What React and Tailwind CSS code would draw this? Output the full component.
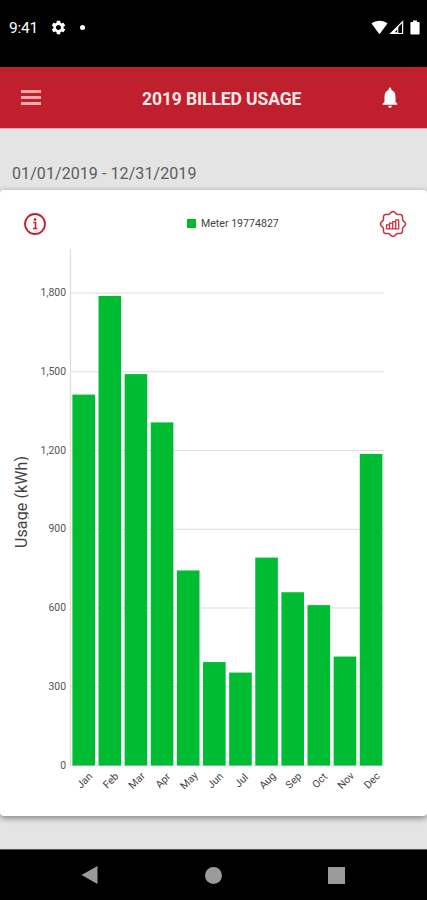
import { MdSettings, MdNotifications } from 'react-icons/md';

const usage = [
  { month: 'Jan', kwh: 1413 },
  { month: 'Feb', kwh: 1789 },
  { month: 'Mar', kwh: 1491 },
  { month: 'Apr', kwh: 1307 },
  { month: 'May', kwh: 743 },
  { month: 'Jun', kwh: 394 },
  { month: 'Jul', kwh: 354 },
  { month: 'Aug', kwh: 792 },
  { month: 'Sep', kwh: 660 },
  { month: 'Oct', kwh: 611 },
  { month: 'Nov', kwh: 415 },
  { month: 'Dec', kwh: 1187 },
];

const ticks = [0, 300, 600, 900, 1200, 1500, 1800];

const LEFT = 70.5;
const RIGHT = 384;
const BASE = 525.5;
const SCALE = 0.2625; // px per kWh
const STEP = (RIGHT - LEFT) / usage.length;

// wavy outline with eight lobes for the badge icon
const badgePoints = Array.from({ length: 96 }, (_, i) => {
  const a = (i / 96) * Math.PI * 2;
  const r = 11.5 + Math.cos(a * 8);
  return `${(14 + r * Math.cos(a)).toFixed(2)},${(14 + r * Math.sin(a)).toFixed(2)}`;
}).join(' ');

const StatusBar = () => (
  <div className="flex h-[67px] items-start justify-between bg-black pt-[17px] text-white">
    <div className="flex h-5 items-center pl-[9px]">
      <span className="w-[29px] pt-0.5 text-[15.5px] leading-5 tracking-[-0.2px]">9:41</span>
      <MdSettings className="ml-3 h-[17px] w-[17px]" />
      <span className="ml-[13px] h-[5px] w-[5px] rounded-full bg-white" />
    </div>
    <div className="flex h-5 items-center pr-[7px]">
      <svg width="17" height="15" viewBox="0 0 17 15" fill="currentColor">
        <path d="M0.5 3.6C2.8 1.8 5.5 0.8 8.5 0.8s5.7 1 8 2.8L8.5 14.2z" />
      </svg>
      <svg className="ml-px" width="15" height="15" viewBox="0 0 15 15">
        <path d="M1.8 13.5 13.6 1.8v11.7z" fill="none" stroke="currentColor" strokeWidth="1.2" />
        <path d="M1 14 9.3 5.7V14z" fill="currentColor" />
        <path d="M5.8 12.2 8.2 9.5v2.7z" fill="#000" />
      </svg>
      <svg className="ml-[6px]" width="10" height="15" viewBox="0 0 10 15" fill="currentColor">
        <path d="M3 0.5h4v1.4h1.8c.5 0 .8.3.8.8v11c0 .5-.3.8-.8.8H1.2c-.5 0-.8-.3-.8-.8v-11c0-.5.3-.8.8-.8H3z" />
      </svg>
    </div>
  </div>
);

const Header = () => (
  <header className="flex h-[62px] items-center border-b border-[#e9a9ad] bg-[#c01f2e] pl-[21px] pr-[26px]">
    <button type="button" aria-label="Menu" className="flex w-5 flex-col gap-[3.5px]">
      <span className="h-[2.5px] bg-[#f1aaa9]" />
      <span className="h-[2.5px] bg-[#f1aaa9]" />
      <span className="h-[2.5px] bg-[#f1aaa9]" />
    </button>
    <h1 className="ml-[101px] whitespace-nowrap pt-[3px] text-[17.5px] font-bold tracking-[-0.1px] text-[#ffe9e6]">
      2019 BILLED USAGE
    </h1>
    <button type="button" aria-label="Notifications" className="ml-auto">
      <MdNotifications className="h-[25px] w-[22px] text-white" preserveAspectRatio="none" />
    </button>
  </header>
);

const InfoIcon = () => (
  <svg width="24" height="24" viewBox="0 0 24 24">
    <circle cx="12" cy="12" r="10" fill="none" stroke="#c4202f" strokeWidth="1.8" />
    <circle cx="12" cy="7.6" r="1.3" fill="#c4202f" />
    <path d="M10.3 10.5h2.2v5.8M10 16.5h4.3" fill="none" stroke="#c4202f" strokeWidth="1.6" />
  </svg>
);

const ChartBadgeIcon = () => (
  <svg width="28" height="28" viewBox="0 0 28 28" fill="none" stroke="#c9303e" strokeLinejoin="round">
    <polygon points={badgePoints} strokeWidth="1.5" />
    <path strokeWidth="1.3" d="M7.5 14.8h3v4h-3zM10.5 13.2h3.2v5.6h-3.2zM13.7 11.6h3v7.2h-3zM16.7 9.8h3v9h-3z" />
  </svg>
);

const UsageChart = () => (
  <svg width="427" height="576" viewBox="0 0 427 576" className="block">
    {ticks.map((t) => {
      const y = BASE - t * SCALE;
      return (
        <g key={t}>
          <line x1={LEFT} x2={RIGHT} y1={y} y2={y} stroke="#dedede" strokeWidth="1.2" />
          <text x="66" y={y + 3.2} textAnchor="end" fontSize="10.4" fill="#555">
            {t.toLocaleString('en-US')}
          </text>
        </g>
      );
    })}
    <line x1={LEFT} x2={LEFT} y1="9" y2={BASE} stroke="#dedede" strokeWidth="1.2" />

    {usage.map(({ month, kwh }, i) => {
      const x = LEFT + i * STEP + 1.9;
      const h = kwh * SCALE;
      const labelX = LEFT + (i + 0.5) * STEP;
      return (
        <g key={month}>
          <rect x={x} y={BASE - h} width="22.6" height={h} fill="#00bc32" />
          <text
            x={labelX + 1}
            y="544"
            textAnchor="middle"
            fontSize="10.4"
            fill="#444"
            transform={`rotate(-45 ${labelX + 1} 540.5)`}
          >
            {month}
          </text>
        </g>
      );
    })}

    {/* axis title box is narrow, so the descender gets cut */}
    <clipPath id="axis-title">
      <rect x="8" y="200" width="20.5" height="120" />
    </clipPath>
    <g clipPath="url(#axis-title)">
      <text transform="translate(26.5 308) rotate(-90)" fontSize="16" textLength="92" fill="#444">
        Usage (kWh)
      </text>
    </g>
  </svg>
);

const App = () => {
  return (
    <div className="flex h-[900px] w-[427px] flex-col overflow-hidden bg-[#e4e4e4] font-['Roboto',sans-serif]">
      <StatusBar />
      <Header />
      <main className="flex-1">
        <p className="h-[61px] pl-3 pt-[33px] text-[16px] leading-6 tracking-[0.08px] text-[#5c5c5c]">
          01/01/2019 - 12/31/2019
        </p>
        <section className="h-[626px] rounded-[4px] bg-white shadow-[0_2px_6px_rgba(0,0,0,0.45)]">
          <div className="flex h-[50px] items-start pl-[23px] pr-[20px] pt-[20px]">
            <div className="pt-0.5">
              <InfoIcon />
            </div>
            <div className="ml-[140px] flex items-center gap-[5px] pt-[5px]">
              <span className="h-[9px] w-[9px] bg-[#00b926]" />
              <span className="pt-px text-[10.6px] leading-4 text-[#444]">Meter 19774827</span>
            </div>
            <div className="ml-auto">
              <ChartBadgeIcon />
            </div>
          </div>
          <UsageChart />
        </section>
      </main>
      <nav className="flex h-[51px] items-center justify-between border-t border-[#555] bg-black pl-[81px] pr-[82px] text-[#9b9b9b]">
        <svg width="17" height="18" viewBox="0 0 17 18" fill="currentColor">
          <path d="M0.5 9 16.5 0v18z" />
        </svg>
        <span className="h-[17px] w-[17px] rounded-full bg-[#9b9b9b]" />
        <span className="h-[17px] w-[17px] bg-[#9b9b9b]" />
      </nav>
    </div>
  );
};

export default App;
